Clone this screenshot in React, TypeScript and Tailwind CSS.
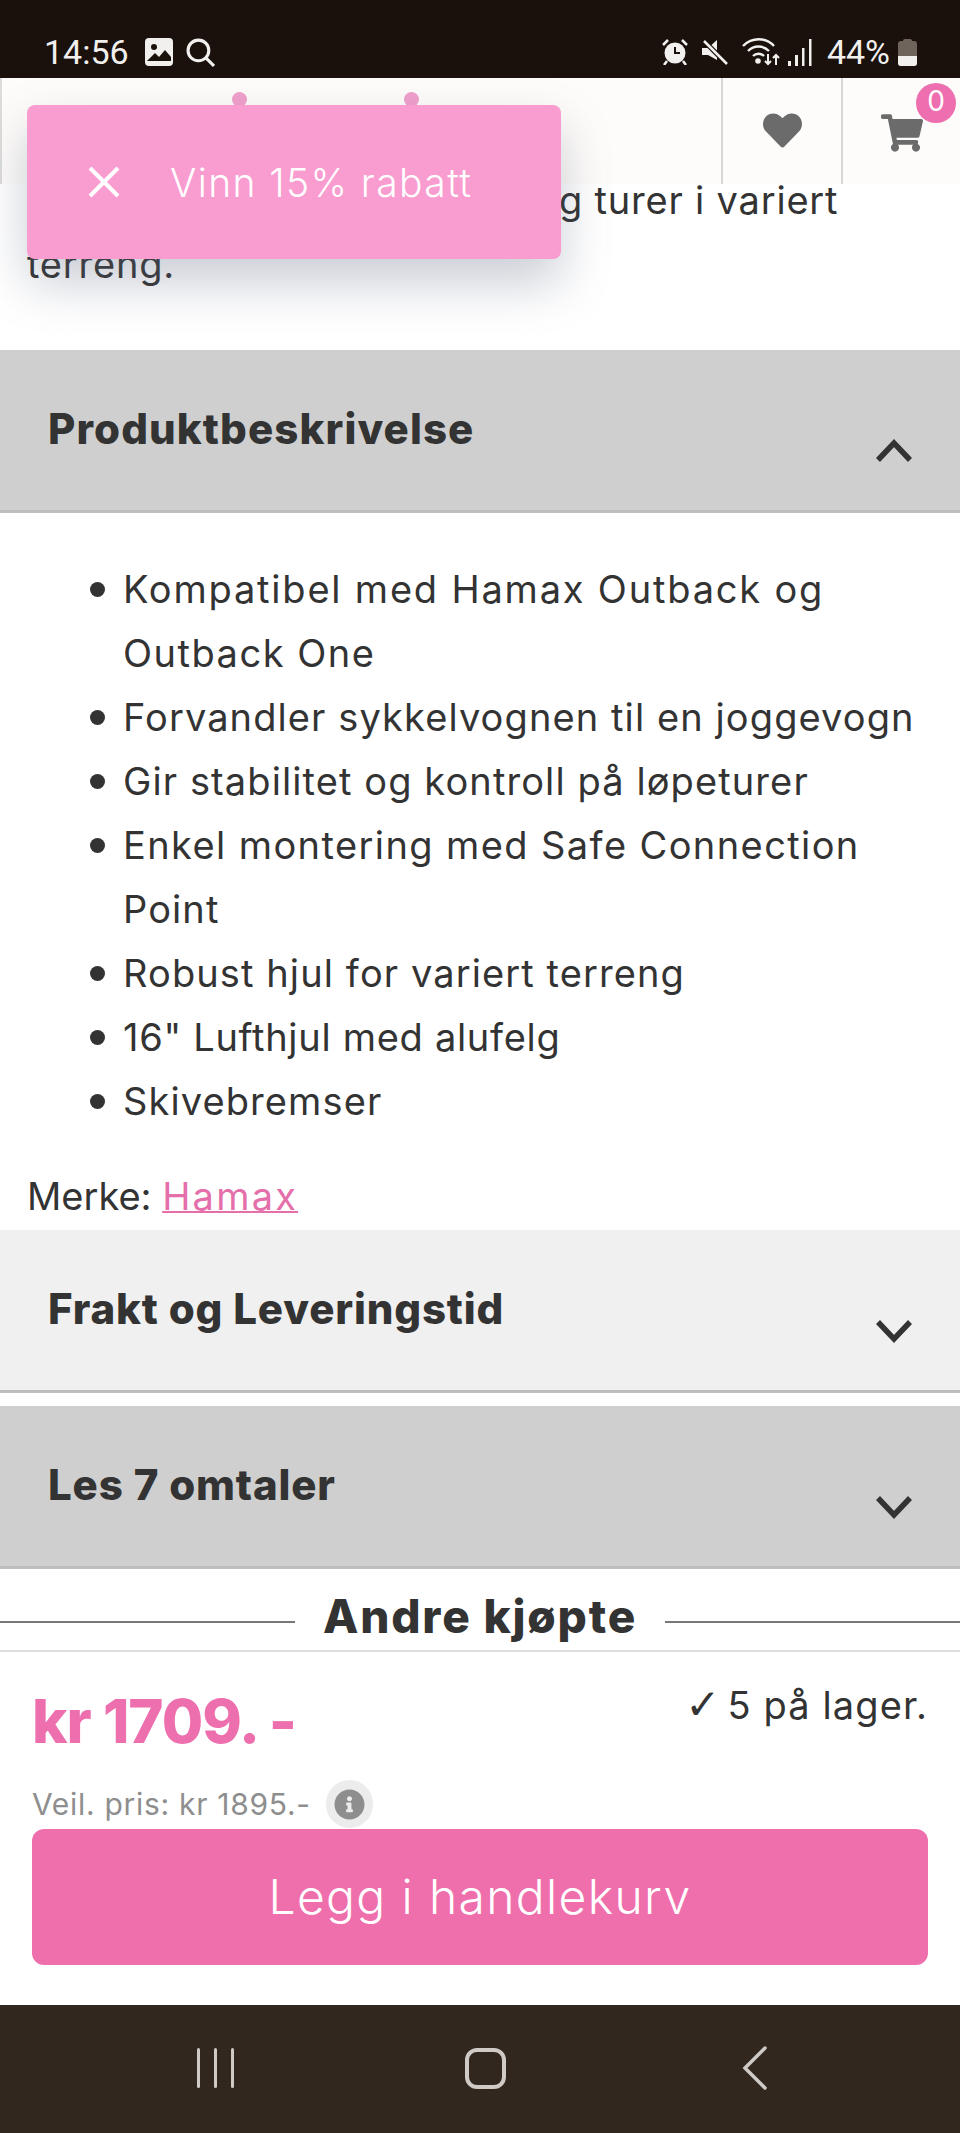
import React from 'react';
import { FaHeart, FaShoppingCart, FaInfoCircle } from 'react-icons/fa';

const bullets: { text: string; tracking?: string }[][] = [
  [{ text: 'Kompatibel med Hamax Outback og', tracking: 'tracking-[1.8px]' }, { text: 'Outback One', tracking: 'tracking-[1.5px]' }],
  [{ text: 'Forvandler sykkelvognen til en joggevogn' }],
  [{ text: 'Gir stabilitet og kontroll på løpeturer' }],
  [{ text: 'Enkel montering med Safe Connection', tracking: 'tracking-[1.4px]' }, { text: 'Point' }],
  [{ text: 'Robust hjul for variert terreng' }],
  [{ text: '16" Lufthjul med alufelg', tracking: 'tracking-[0.7px]' }],
  [{ text: 'Skivebremser' }],
];

const Chevron = ({ up = false }: { up?: boolean }) => (
  <svg viewBox="0 0 36 24" className="w-[36px] h-[24px]" fill="none" stroke="#333" strokeWidth="5.5">
    <polyline points={up ? '2,21 18,4 34,21' : '2,3 18,20 34,3'} />
  </svg>
);

const AccordionRow = ({ title, bg, tracking, up = false }: { title: string; bg: string; tracking: string; up?: boolean }) => (
  <div className={`h-[163px] border-b-[3px] border-[#bdbdbd] flex justify-between pl-[48px] pr-[48px] ${bg}`}>
    <h3 className={`mt-[51px] text-[42px] leading-[56px] font-extrabold text-[#333] ${tracking}`}>{title}</h3>
    <div className="mt-[89px]">
      <Chevron up={up} />
    </div>
  </div>
);

const StatusBar = () => (
  <div className="h-[78px] shrink-0 bg-[#1a110c] text-[#f2f0ee] flex items-end justify-between pb-[9px] pl-[44px] pr-[43px] font-['Roboto',sans-serif]">
    <div className="flex items-center">
      <span className="text-[34px] leading-[34px]">14:56</span>
      <svg viewBox="0 0 28 28" className="w-[28px] h-[28px] ml-[16px]">
        <rect width="28" height="28" rx="4" fill="#f2f0ee" />
        <circle cx="9" cy="9" r="3" fill="#1a110c" />
        <path d="M2 23 L10 15 L14 19 L20 12 L26 19 V23 Z" fill="#1a110c" />
      </svg>
      <svg viewBox="0 0 28 28" className="w-[29px] h-[29px] ml-[13px]" fill="none" stroke="#f2f0ee" strokeWidth="3">
        <circle cx="12" cy="12" r="10" />
        <path d="M19 19 L27 27" />
      </svg>
    </div>
    <div className="flex items-center">
      <svg viewBox="0 0 26 26" className="w-[26px] h-[26px]">
        <circle cx="13" cy="14" r="10.5" fill="#f2f0ee" />
        <path d="M13 8 V14 H18" fill="none" stroke="#1a110c" strokeWidth="2" />
        <path d="M1 6 L6 1 M25 6 L20 1 M5 22 L2 26 M21 22 L24 26" stroke="#f2f0ee" strokeWidth="2.5" />
      </svg>
      <svg viewBox="0 0 26 26" className="w-[26px] h-[26px] ml-[14px]">
        <path d="M0 9 H6 L15 1 V21 L6 16 H0 Z" fill="#f2f0ee" />
        <path d="M2 2 L25 25" stroke="#1a110c" strokeWidth="5" />
        <path d="M2 2 L25 25" stroke="#f2f0ee" strokeWidth="2.5" />
      </svg>
      <svg viewBox="0 0 38 28" className="w-[38px] h-[28px] ml-[14px]" fill="none" stroke="#f2f0ee" strokeWidth="2.4">
        <path d="M1 8 C10 -1 24 -1 32 8" />
        <path d="M6 13 C12 7 21 7 27 13" />
        <path d="M11 18 C14 15 19 15 22 18" />
        <circle cx="16" cy="23" r="1.6" fill="#f2f0ee" />
        <path d="M26 16 V26 M23 23 L26 26 L29 23 M34 27 V17 M31 20 L34 17 L37 20" strokeWidth="2" />
      </svg>
      <svg viewBox="0 0 25 27" className="w-[25px] h-[27px] ml-[8px]" fill="#f2f0ee">
        <rect x="0" y="22" width="3" height="5" />
        <rect x="7" y="16" width="3" height="11" />
        <rect x="14" y="9" width="2.5" height="18" />
        <rect x="21" y="0" width="2.5" height="27" />
      </svg>
      <span className="text-[34px] leading-[34px] ml-[14px]">44%</span>
      <div className="ml-[8px] relative w-[19px] h-[27px] flex flex-col">
        <div className="mx-auto w-[9px] h-[2px] bg-[#6e645c] rounded-t-sm" />
        <div className="flex-1 rounded-[3px] bg-[#6e645c] overflow-hidden flex flex-col justify-end">
          <div className="h-[10px] bg-[#f2f0ee]" />
        </div>
      </div>
    </div>
  </div>
);

const Header = () => (
  <div className="relative z-10 h-[106px] shrink-0 bg-[#fefcfa] flex justify-end">
    <div className="absolute left-0 top-0 bottom-0 w-[2px] bg-[#dcdcdc]" />
    <span className="absolute left-[232px] top-[14px] w-[15px] h-[15px] rounded-full bg-[#f09fcb]" />
    <span className="absolute left-[404px] top-[14px] w-[15px] h-[15px] rounded-full bg-[#f09fcb]" />
    <div className="w-[120px] border-l-2 border-[#d6d6d6] flex items-center justify-center">
      <FaHeart className="w-[39px] h-[39px] text-[#6b6b6b] -mt-[2px]" />
    </div>
    <div className="w-[119px] border-l-2 border-[#d6d6d6] flex items-start pl-[38px] pt-[34px]">
      <FaShoppingCart className="w-[42px] h-[42px] text-[#6b6b6b]" />
    </div>
    <span className="absolute right-[4px] top-[5px] w-[40px] h-[40px] rounded-full bg-[#ed6fb0] text-white text-[28px] leading-[36px] text-center">
      0
    </span>
  </div>
);

export default function App() {
  return (
    <div className="relative w-[960px] h-[2133px] overflow-hidden bg-white flex flex-col font-['Inter',sans-serif] text-[#333]">
      <StatusBar />
      <Header />

      {/* Discount popup */}
      <div className="absolute z-20 left-[27px] top-[105px] w-[534px] h-[154px] rounded-[8px] bg-[#f99ccf] shadow-[0_24px_50px_rgba(90,100,125,0.32)] flex items-center pl-[61px] text-white">
        <svg viewBox="0 0 32 32" className="w-[32px] h-[32px] shrink-0" fill="none" stroke="white" strokeWidth="4">
          <path d="M2 2 L30 30 M30 2 L2 30" />
        </svg>
        <span className="ml-[50px] text-[39px] leading-none font-light tracking-[1.4px] whitespace-nowrap">Vinn 15% rabatt</span>
      </div>

      <div className="flex-1 min-h-0 flex flex-col -mt-[16px]">
        <p className="px-[27px] pb-[54px] text-[38px] leading-[64px] tracking-[0.8px]">
          <span className="block pl-[532px] whitespace-nowrap">g turer i variert</span>
          <span className="block">terreng.</span>
        </p>

        <AccordionRow title="Produktbeskrivelse" bg="bg-[#cfcfcf]" tracking="tracking-[1.1px]" up />

        <ul className="pl-[90px] pt-[44px] text-[38px] leading-[64px] tracking-[1.1px]">
          {bullets.map((lines) => (
            <li key={lines[0].text} className="flex items-start">
              <span className="shrink-0 w-[15px] h-[15px] mt-[25px] mr-[18px] rounded-full bg-[#333]" />
              <div>
                {lines.map((line) => (
                  <span key={line.text} className={`block whitespace-nowrap ${line.tracking ?? ''}`}>
                    {line.text}
                  </span>
                ))}
              </div>
            </li>
          ))}
        </ul>

        <p className="pl-[27px] mt-[31px] text-[38px] leading-[64px] h-[66px]">
          Merke: <a className="text-[#e56fab] underline decoration-2 tracking-[2.2px]">Hamax</a>
        </p>

        <AccordionRow title="Frakt og Leveringstid" bg="bg-[#f0f0f0]" tracking="tracking-[0.85px]" />
        <div className="h-[13px]" />
        <AccordionRow title="Les 7 omtaler" bg="bg-[#cfcfcf]" tracking="tracking-[0.85px]" />

        <div className="h-[83px] border-b-[2px] border-[#dedede] flex items-start gap-[28px]">
          <div className="flex-1 h-[2px] bg-[#777] mt-[52px]" />
          <h2 className="mt-[19px] text-[46px] leading-[56px] font-extrabold text-[#333] tracking-[1.8px] whitespace-nowrap">Andre kjøpte</h2>
          <div className="flex-1 h-[2px] bg-[#777] mt-[52px]" />
        </div>

        {/* Buy box */}
        <div className="flex-1 min-h-0 px-[32px] flex flex-col">
          <div className="flex justify-between items-start">
            <span className="mt-[34px] text-[60px] leading-[70px] font-extrabold text-[#ee6fae] tracking-[-1px]">kr 1709. -</span>
            <span className="mt-[30px] text-[38px] leading-[46px] tracking-[1.1px] whitespace-nowrap flex">
              <span className="font-['DejaVu_Sans',sans-serif] font-bold text-[42px] mr-[6px]">✓</span>5 på lager.
            </span>
          </div>
          <div className="mt-[24px] h-[48px] flex items-center text-[#8e8e8e] text-[30px] leading-[40px] tracking-[0.7px]">
            <span>Veil. pris: kr 1895.-</span>
            <span className="ml-[15px] w-[47px] h-[48px] rounded-full bg-[#ececec] flex items-center justify-center">
              <FaInfoCircle className="w-[31px] h-[31px] text-[#8e8e8e]" />
            </span>
          </div>
          <button className="mt-[1px] h-[136px] rounded-[12px] bg-[#ef6fad] text-white text-[48px] font-light tracking-[1.35px]">
            Legg i handlekurv
          </button>
        </div>
      </div>

      {/* Android nav bar */}
      <div className="h-[128px] shrink-0 bg-[#32271f] flex items-center pl-[197px] pb-[2px]">
        <div className="flex gap-[14px]">
          <div className="w-[3px] h-[40px] bg-[#cfcac5] rounded-full" />
          <div className="w-[3px] h-[40px] bg-[#cfcac5] rounded-full" />
          <div className="w-[3px] h-[40px] bg-[#cfcac5] rounded-full" />
        </div>
        <div className="ml-[231px] w-[41px] h-[41px] rounded-[12px] border-[4px] border-[#cfcac5]" />
        <svg viewBox="0 0 26 44" className="ml-[236px] w-[26px] h-[44px]" fill="none" stroke="#cfcac5" strokeWidth="3.5" strokeLinecap="round">
          <path d="M23 2 L3 22 L23 42" />
        </svg>
      </div>
    </div>
  );
}
